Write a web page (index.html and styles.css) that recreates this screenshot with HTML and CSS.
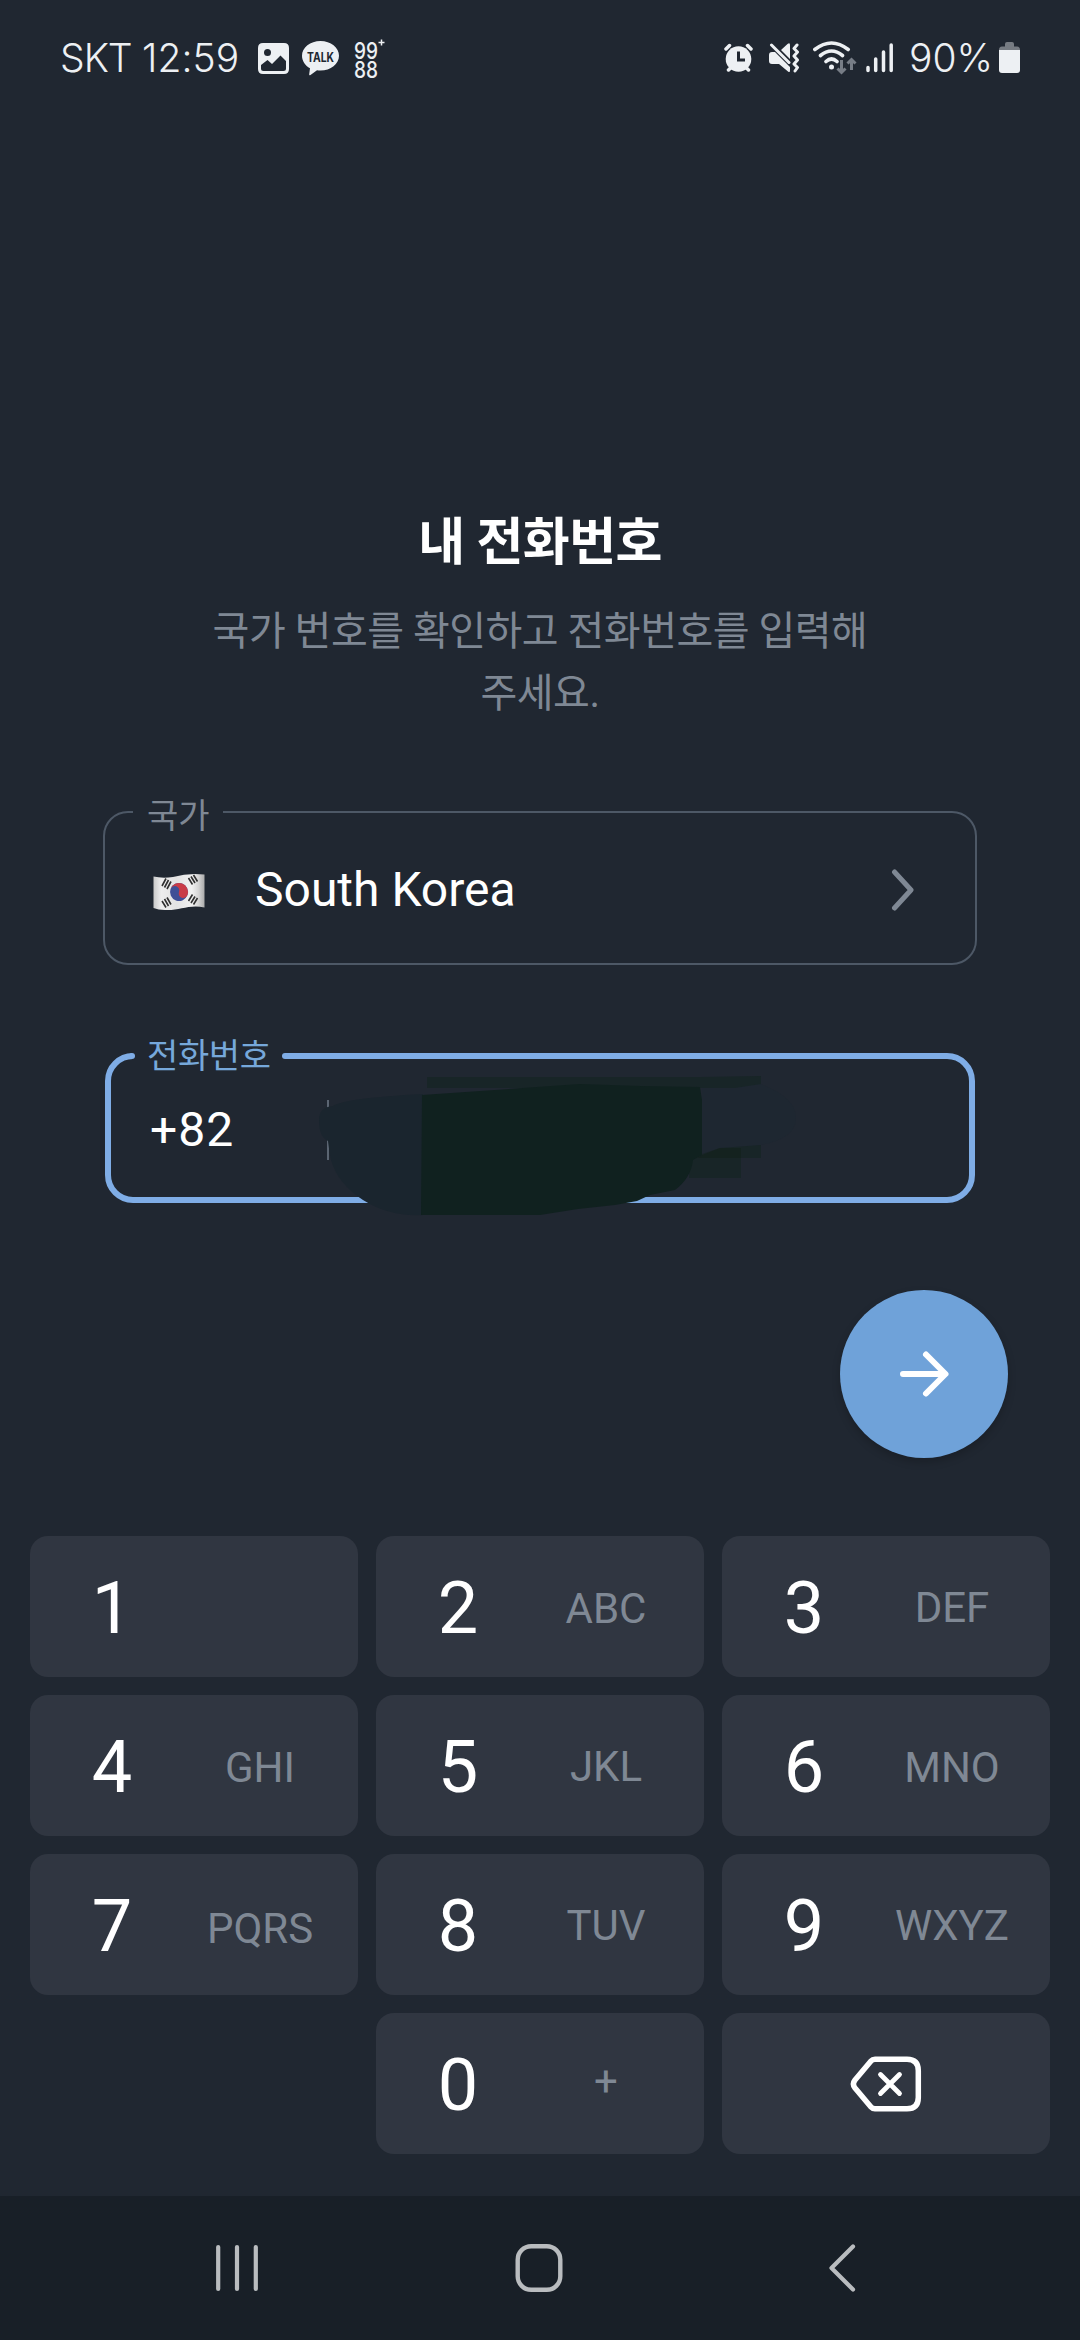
FILE: index.html
```html
<!DOCTYPE html>
<html lang="ko">
<head>
<meta charset="utf-8">
<title>내 전화번호</title>
<link rel="stylesheet" href="styles.css">
</head>
<body>
<div class="screen">
  <header class="status">
    <span class="carrier">SKT</span>
    <span class="clock">12:59</span>
    <svg class="icon-image" width="31" height="31" viewBox="0 0 31 31"><path fill="currentColor" fill-rule="evenodd" d="M5 0H26Q31 0 31 5V26Q31 31 26 31H5Q0 31 0 26V5Q0 0 5 0ZM3 22V25.500Q3 28 5.500 28H25.500Q28 28 28 25.500V18L22.500 12.500L14 21L9.500 17Z"/><circle cx="9.500" cy="9.500" r="3.500" fill="#202731"/></svg>
    <svg class="icon-talk" width="37" height="35" viewBox="0 0 37 35"><path fill="currentColor" d="M18.500 0C28.700 0 37 6.600 37 14.800S28.700 29.600 18.500 29.600Q16.500 29.600 15 29.300L8.500 34Q7 35 7.200 33.300L8 27.300C3.200 24.600 0 20 0 14.800C0 6.600 8.300 0 18.500 0Z"/><text class="talk-text" x="18.500" y="20.500" text-anchor="middle" textLength="27" lengthAdjust="spacingAndGlyphs">TALK</text></svg>
    <svg class="icon-9988" width="31" height="40" viewBox="0 0 31 40"><text class="num-text" x="0" y="19.500" textLength="24" lengthAdjust="spacingAndGlyphs">99</text><text class="num-text" x="0" y="38.500" textLength="24" lengthAdjust="spacingAndGlyphs">88</text><path stroke="currentColor" stroke-width="1.500" d="M24.500 3.500h6M27.500 .5v6"/></svg>
    <span class="grow"></span>
    <svg class="icon-alarm" width="29" height="30" viewBox="0 0 29 30"><circle cx="14.500" cy="16" r="12.800" fill="currentColor"/><path stroke="currentColor" stroke-width="3.500" stroke-linecap="round" d="M2 6L5.500 2.500M27 6L23.500 2.500M4.500 27L7 24.500M24.500 27L22 24.500"/><path fill="none" stroke="#202731" stroke-width="3" d="M14.500 8.500V17H21"/></svg>
    <svg class="icon-mute" width="31" height="30" viewBox="0 0 31 30"><path fill="currentColor" d="M0 12Q0 9 3 9H6L21 24V27.500Q21 30 19 28.500L10 21H3Q0 21 0 18ZM12 7L18.500 1Q21-1 21 2V16Z"/><path fill="none" stroke="currentColor" stroke-width="3" stroke-linecap="round" stroke-linejoin="round" d="M2.500 2L20 19.500M28 2L25 5.500L28.500 9L25 13L28.500 17L25 21L28.500 24.500L26 28"/></svg>
    <svg class="icon-wifi" width="44" height="34" viewBox="0 0 44 34"><g fill="none" stroke="currentColor" stroke-width="3.600" stroke-linecap="round"><path d="M1.800 8.500Q18.500-4.500 35.200 8.500M7.500 14.500Q18.500 5.500 29.500 14.500M13 20.500Q18.500 15.500 24 20.500"/></g><circle cx="18.500" cy="26" r="2.500" fill="currentColor"/><path class="traffic" d="M28.500 19V31M24.500 27.500L28.500 31.500L32.500 27.500M38.500 29V19M34.500 22.500L38.500 18.500L42.500 22.500"/></svg>
    <svg class="icon-signal" width="28" height="30" viewBox="0 0 28 30"><path stroke="currentColor" stroke-width="3.500" stroke-linecap="round" d="M2 24.500V27.500M9.700 16V27.500M17.500 9V27.500M25.200 2V27.500"/></svg>
    <span class="battery-text">90%</span>
    <svg class="icon-battery" width="21" height="31" viewBox="0 0 21 31"><path fill="#767b82" d="M0 8Q0 4.500 3 4.500H6V2Q6 0 8 0H13Q15 0 15 2V4.500H18Q21 4.500 21 8Z"/><path fill="currentColor" d="M0 8H21V28Q21 31 18 31H3Q0 31 0 28Z"/></svg>
  </header>

  <main class="login">
    <h1 class="title">내 전화번호</h1>
    <p class="subtitle">국가 번호를 확인하고 전화번호를 입력해<br>주세요.</p>

    <fieldset class="field country">
      <legend class="legend"><span class="label label-country">국가</span></legend>
      <div class="row">
        <svg class="flag" width="52" height="38" viewBox="0 0 52 38">
          <defs><linearGradient id="cloth"><stop offset="0" stop-color="#c9c9c9"/><stop offset=".15" stop-color="#eee"/><stop offset=".45" stop-color="#e3e3e3"/><stop offset=".75" stop-color="#f1f1f1"/><stop offset=".88" stop-color="#d6d6d6"/><stop offset="1" stop-color="#aaa"/></linearGradient></defs>
          <path fill="url(#cloth)" d="M.500 3.500Q9 5.500 20 4Q36-.5 51.500 1.500V34.500C36 31 26 38 12 37Q5 37 .500 35Z"/>
          <g transform="rotate(20 26 19)"><circle cx="26" cy="19" r="9" fill="#3f4f96"/><path fill="#c93b47" d="M17 19a9 9 0 0 1 18 0a4.500 4.500 0 0 1-9 0a4.500 4.500 0 0 0-9 0Z"/></g>
          <g fill="none" stroke="#303030" stroke-width="1.600"><path d="M9 13L13 5.500M11.500 14.500L15.500 7M14 16L18 8.500M35.500 5L39.500 11.500M38 3.500L42 10M40.500 2L44.500 8.500M9 28L13 34.500M11.500 26L15.500 33M14 24.500L18 31.500M35.500 28L39.500 21.500M38 30L42 23.500M40.500 31.500L44.500 25"/></g>
        </svg>
        <span class="value">South Korea</span>
        <svg class="chevron" width="24" height="44" viewBox="0 0 24 44"><path fill="none" stroke="#7f8894" stroke-width="5" stroke-linecap="round" stroke-linejoin="round" d="M3.500 4L20 22L3.500 40"/></svg>
      </div>
    </fieldset>

    <fieldset class="field phone">
      <legend class="legend"><span class="label label-phone">전화번호</span></legend>
      <div class="row"><span class="code">+82</span><span class="divider"></span></div>
      <svg class="scribble" width="480" height="146" viewBox="317 1073 480 146">
        <path fill="#1e2731" d="M702 1084L755 1082Q796 1096 796 1118T755 1146L720 1150L702 1155Z"/>
        <path fill="#1a252e" d="M333 1106Q345 1098 423 1094V1215Q390 1217 363 1200Q338 1184 331 1160Q329 1150 328 1141Q319 1137 319 1120Q319 1107 333 1106Z"/>
        <path fill="#182527" d="M427 1077H700L761 1076V1084L735 1088H427ZM690 1158L720 1148L761 1145V1158H741V1178H689Z"/>
        <path fill="#14221f" d="M700 1156L720 1148H741V1158H698Z"/>
        <path fill="#10211f" d="M422 1095L480 1091L580 1084L640 1086L700 1087L702 1100V1155L693 1160Q691 1178 675 1190L650 1195L637 1201L615 1205L578 1209L540 1215H421Z"/>
      </svg>
    </fieldset>

    <button class="next"><svg width="52" height="48" viewBox="0 0 52 48"><path fill="none" stroke="#fff" stroke-width="6" stroke-linecap="round" stroke-linejoin="round" d="M5 24H47M28 4.500L47.500 24L28 43.500"/></svg></button>
  </main>

  <section class="keypad">
    <div class="key"><span class="digit">1</span></div>
    <div class="key"><span class="digit">2</span><span class="letters low">ABC</span></div>
    <div class="key"><span class="digit">3</span><span class="letters">DEF</span></div>
    <div class="key"><span class="digit">4</span><span class="letters low">GHI</span></div>
    <div class="key"><span class="digit">5</span><span class="letters">JKL</span></div>
    <div class="key"><span class="digit">6</span><span class="letters low">MNO</span></div>
    <div class="key"><span class="digit">7</span><span class="letters lowest">PQRS</span></div>
    <div class="key"><span class="digit">8</span><span class="letters">TUV</span></div>
    <div class="key"><span class="digit">9</span><span class="letters">WXYZ</span></div>
    <div class="key zero"><span class="digit">0</span><span class="letters plus">+</span></div>
    <div class="key erase"><svg width="72" height="56" viewBox="0 0 72 56"><path fill="none" stroke="#fff" stroke-width="5.500" stroke-linejoin="round" d="M25 3.200H57Q68.300 3.200 68.300 14.500V41.500Q68.300 52.800 57 52.800H25Q22.500 52.800 21 51L5 32Q1.800 28 5 24L21 5Q22.500 3.200 25 3.200Z"/><path stroke="#fff" stroke-width="4.800" stroke-linecap="round" d="M30.500 18.500L49.500 37.500M49.500 18.500L30.500 37.500"/></svg></div>
  </section>

  <nav class="navbar">
    <svg width="44" height="50" viewBox="0 0 44 50"><path stroke="currentColor" stroke-width="4.200" stroke-linecap="round" d="M3.200 4V46M22 4V46M40.800 4V46"/></svg>
    <svg class="home" width="48" height="50" viewBox="0 0 48 50"><rect x="2.700" y="3.200" width="42.600" height="43.600" rx="13.500" fill="none" stroke="currentColor" stroke-width="4.400"/></svg>
    <svg width="28" height="50" viewBox="0 0 28 50"><path fill="none" stroke="currentColor" stroke-width="4.200" stroke-linecap="round" stroke-linejoin="round" d="M25 3.500L3.500 25L25 46.500"/></svg>
  </nav>
</div>
</body>
</html>
```
FILE: styles.css
```css
* {
  box-sizing: border-box;
}

body {
  margin: 0;
  background: #202731;
  font-family: Roboto, "Noto Sans CJK KR", sans-serif;
}

svg {
  display: block;
  flex: none;
}

.screen {
  display: flex;
  flex-direction: column;
  width: 1080px;
  height: 2340px;
  overflow: hidden;
  background: #202731;
}

/* Status bar */
.status {
  display: flex;
  align-items: flex-start;
  height: 100px;
  padding: 0 60px 0 60px;
  color: #edf0f3;
  font-family: Inter, sans-serif;
  font-size: 39px;
  line-height: 47px;
}

.carrier,
.clock,
.battery-text {
  flex: none;
  margin-top: 34px;
  white-space: nowrap;
  font-weight: 350;
}

.carrier { width: 82px; letter-spacing: -1px; }
.clock { width: 116px; letter-spacing: .1px; }
.icon-image { margin-top: 43px; }
.icon-talk { margin: 41px 0 0 13px; }
.icon-9988 { margin: 39px 0 0 15px; overflow: visible; }
.grow { flex: 1; }
.icon-alarm { margin: 43px 16px 0 0; }
.icon-mute { margin: 43px 13px 0 0; }
.icon-wifi { margin: 41px 9px 0 0; }
.icon-signal { margin: 43px 15px 0 0; }
.battery-text { width: 90px; letter-spacing: 0; }
.icon-battery { margin-top: 42px; }

.talk-text {
  fill: #202731;
  font: 700 13px Inter, sans-serif;
}

.num-text {
  fill: currentColor;
  font: 500 23px Inter, sans-serif;
}

.traffic {
  fill: none;
  stroke: #777d86;
  stroke-width: 3;
}

/* Login form */
.login {
  display: flex;
  flex-direction: column;
  align-items: center;
  height: 1436px;
  padding-top: 403px;
}

.title {
  margin: 0;
  color: #fff;
  font-size: 51px;
  font-weight: 700;
  letter-spacing: -.6px;
  line-height: 80px;
}

.subtitle {
  margin: 18px 0 0;
  color: #7f8894;
  font-size: 40px;
  letter-spacing: -.5px;
  line-height: 62px;
  text-align: center;
}

.field {
  position: relative;
  min-width: 0;
  margin: 0;
  border-style: solid;
}

.country {
  width: 874px;
  height: 171px;
  margin-top: 69px;
  padding: 0 60px 0 28px;
  border-width: 2px;
  border-color: #4d5866;
  border-radius: 25px;
}

.phone {
  width: 870px;
  height: 165px;
  margin-top: 73px;
  padding: 0 21px;
  border-width: 6px;
  border-color: #7fade6;
  border-radius: 28px;
}

.legend {
  position: relative;
  height: 36px;
  padding: 0;
  font-size: 34px;
  line-height: 36px;
}

.country .legend { width: 90px; }
.phone .legend { width: 153px; }

/* Rounded ends of the focused outline beside its label */
.phone .legend::before,
.phone .legend::after {
  content: "";
  position: absolute;
  top: 15px;
  width: 6px;
  height: 6px;
  border-radius: 50%;
  background: #7fade6;
}

.phone .legend::before { left: -3px; }
.phone .legend::after { right: -3px; }

.label {
  display: block;
  white-space: nowrap;
}

.label-country { padding: 4px 0 0 14px; color: #7f8894; }
.label-phone { padding: 0 0 0 15px; color: #76a8da; letter-spacing: -.4px; }

.row {
  display: flex;
  align-items: center;
  color: #fff;
  font-size: 48px;
  line-height: 56px;
}

.country .row { margin-top: 32px; }
.phone .row { margin-top: 26px; }
.flag { margin: 4px 50px 0 20px; }
.value { flex: 1; }
.code { width: 176px; margin-left: 18px; letter-spacing: 1px; }

.divider {
  width: 2px;
  height: 60px;
  margin-left: 1px;
  background: #5b6572;
}

.scribble {
  position: absolute;
  left: 206px;
  top: -1px;
}

.next {
  display: flex;
  align-items: center;
  justify-content: center;
  align-self: flex-end;
  width: 168px;
  height: 168px;
  margin: 87px 72px 0 0;
  padding: 0;
  border: 0;
  border-radius: 50%;
  background: #6fa2d9;
  box-shadow: 0 4px 9px rgba(0, 0, 0, .2);
}

/* Numeric keypad */
.keypad {
  display: grid;
  grid-template-columns: repeat(3, 328px);
  grid-auto-rows: 141px;
  gap: 18px;
  height: 660px;
  padding: 0 30px;
}

.key {
  display: flex;
  border-radius: 18px;
  background: #303641;
  line-height: 141px;
}

.digit {
  width: 164px;
  padding-top: 2px;
  color: #fff;
  font-size: 72px;
  text-align: center;
}

.letters {
  width: 132px;
  padding-top: 1px;
  color: #7f8894;
  font-size: 42px;
  text-align: center;
}

.low { padding-top: 2px; }
.lowest { padding-top: 4px; }
.plus { margin-top: -3px; }
.zero { grid-column: 2; }

.erase {
  align-items: center;
  justify-content: center;
}

/* System navigation */
.navbar {
  display: flex;
  align-items: center;
  justify-content: space-between;
  height: 144px;
  padding: 0 224px 0 215px;
  background: #181f27;
  color: #b9bcbf;
}

.home { margin-right: 9px; }
```
